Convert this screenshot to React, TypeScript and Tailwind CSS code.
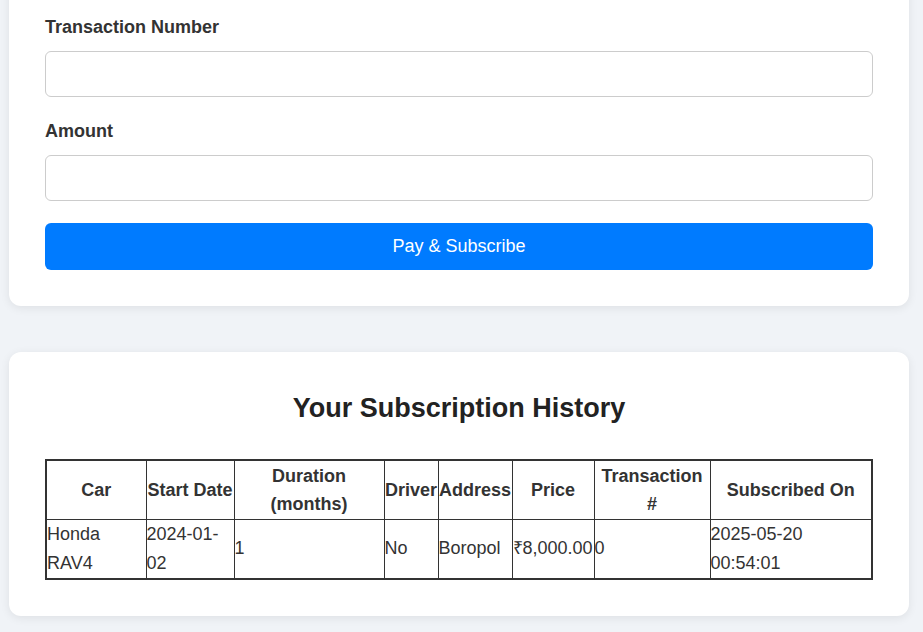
const rows = [
  {
    car: 'Honda RAV4',
    start: '2024-01-02',
    duration: '1',
    driver: 'No',
    address: 'Boropol',
    price: '₹8,000.00',
    txn: '0',
    subscribed: '2025-05-20 00:54:01',
  },
];

const Field = ({ label }: { label: string }) => (
  <div className="mb-[23px]">
    <label className="block text-[18px] font-bold leading-[22px] text-[#333] mb-[13px]">{label}</label>
    <input
      type="text"
      className="block w-full h-[46px] rounded-[6px] border border-[#ccc] bg-white px-3 text-[18px] outline-none"
    />
  </div>
);

export default function App() {
  return (
    <div className="min-h-[632px] bg-[#f0f3f7] pl-[9px] pb-10 font-['Liberation_Sans',Arial,sans-serif] text-[#333]">
      <div className="w-[900px] -mt-5 rounded-[12px] bg-white px-[36px] pt-[36px] pb-[36px] shadow-[0_2px_10px_rgba(0,0,0,0.08)]">
        <Field label="Transaction Number" />
        <div className="-mb-px">
          <Field label="Amount" />
        </div>
        <button className="w-full h-[47px] rounded-[6px] bg-[#007bff] text-[18px] text-white">
          Pay &amp; Subscribe
        </button>
      </div>

      <div className="w-[900px] mt-[46px] rounded-[12px] bg-white px-[36px] pt-[40px] pb-[36px] shadow-[0_2px_10px_rgba(0,0,0,0.08)]">
        <h2 className="text-center text-[27px] font-bold leading-[32px] text-[#222] mb-[35px]">
          Your Subscription History
        </h2>
        <table className="w-[826px] border-collapse border-2 border-[#333] table-fixed text-[18px]">
          <colgroup>
            <col className="w-[100px]" />
            <col className="w-[88px]" />
            <col className="w-[150px]" />
            <col className="w-[54px]" />
            <col className="w-[74px]" />
            <col className="w-[82px]" />
            <col className="w-[116px]" />
            <col className="w-[162px]" />
          </colgroup>
          <thead>
            <tr className="h-[59px]">
              {['Car', 'Start Date', 'Duration (months)', 'Driver', 'Address', 'Price', 'Transaction #', 'Subscribed On'].map((h) => (
                <th key={h} className="border border-[#333] p-0 text-center align-middle font-bold leading-[28px] whitespace-normal">
                  {h}
                </th>
              ))}
            </tr>
          </thead>
          <tbody>
            {rows.map((r) => (
              <tr key={r.subscribed} className="h-[59px]">
                <td className="border border-[#333] p-0 align-middle leading-[29px]">{r.car}</td>
                <td className="border border-[#333] p-0 align-middle leading-[29px]">{r.start}</td>
                <td className="border border-[#333] p-0 align-middle leading-[29px]">{r.duration}</td>
                <td className="border border-[#333] p-0 align-middle leading-[29px]">{r.driver}</td>
                <td className="border border-[#333] p-0 align-middle leading-[29px]">{r.address}</td>
                <td className="border border-[#333] p-0 align-middle leading-[29px] whitespace-nowrap">{r.price}</td>
                <td className="border border-[#333] p-0 align-middle leading-[29px]">{r.txn}</td>
                <td className="border border-[#333] p-0 align-middle leading-[29px]">{r.subscribed}</td>
              </tr>
            ))}
          </tbody>
        </table>
      </div>
    </div>
  );
}
